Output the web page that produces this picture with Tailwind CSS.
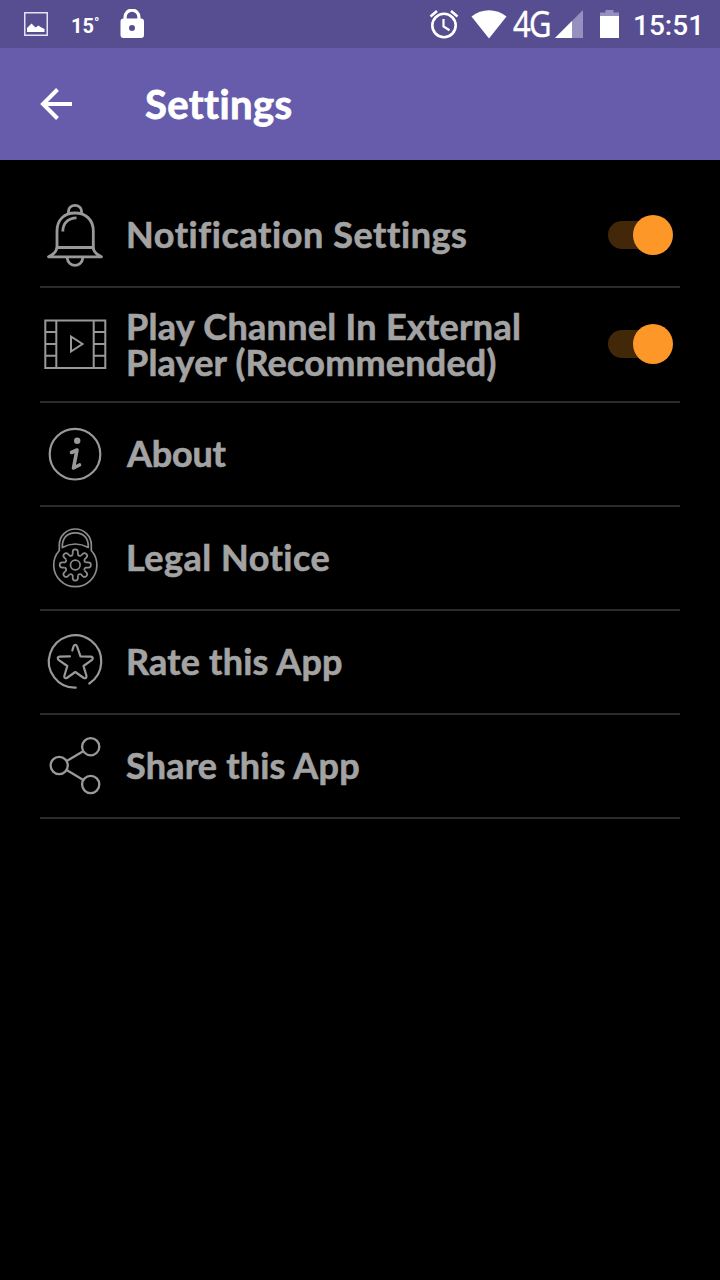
<!DOCTYPE html>
<html lang="en">
	<head>
		<meta charset="UTF-8" />
		<meta name="viewport" content="width=device-width, initial-scale=1.0" />
		<title>Settings</title>
		<script src="https://cdn.jsdelivr.net/npm/@tailwindcss/browser@4"></script>
	</head>
	<body class="min-h-screen overflow-hidden bg-black font-['Lato',sans-serif] text-[#a3a3a3]">
		<!-- status bar -->
		<div class="flex h-12 items-center bg-[#574e91] pl-6 pr-4 font-['Roboto',sans-serif] text-white">
			<svg class="h-6 w-6" viewBox="0 0 24 24" fill="none">
				<rect x="0.75" y="0.75" width="22.5" height="22.5" stroke="#e4e2f0" stroke-width="1.5" />
				<path fill="white" d="M3 20v-4l4.500-4.500 4 4 3-2 2 1.500 4 2v3z" />
			</svg>
			<span class="ml-[23px] flex w-[29px] pt-[3px] text-[20px] leading-6 font-bold">15<span class="text-[14px] leading-[18px]">°</span></span>
			<svg class="ml-5 h-[30px] w-6" viewBox="0 0 24 30">
				<path
					fill="white"
					fill-rule="evenodd"
					d="M3.500 9.500V8a8 8 0 0 1 17 0v1.500H21a3 3 0 0 1 3 3V26a3 3 0 0 1-3 3H3.500a3 3 0 0 1-3-3V12.500a3 3 0 0 1 3-3zM6.700 9.500h10.600V8a5.300 5.300 0 0 0-10.600 0zM12 16a3 3 0 1 0 0 6 3 3 0 0 0 0-6z"
				></path>
			</svg>
			<svg class="ml-auto h-[30px] w-[30px]" viewBox="0 0 30 30" fill="none" stroke="white">
				<circle cx="15" cy="16.500" r="11.700" stroke-width="2.600" />
				<path stroke-width="2.200" d="M14.500 10v7.500l6 3.800" />
				<path stroke-width="2.600" d="M1.500 7.500l6.500-5.500M28.500 7.500L22 2" />
			</svg>
			<svg class="ml-3 h-[30px] w-9" viewBox="0 0 36 30">
				<path fill="white" d="M0.500 7.500C11-1 25-1 35.500 7.500L18 29.500z" />
			</svg>
			<span class="ml-1.5 w-[42px] origin-left scale-x-[0.86] font-['Open_Sans',sans-serif] text-[36px] leading-[48px] tracking-[-2px] [-webkit-text-stroke:0.5px_white]">4G</span>
			<svg class="h-7 w-7" viewBox="0 0 28 28">
				<path fill="#9790be" d="M0 28L28 0v28z" />
				<path fill="white" d="M0 28L17 11V28z" />
			</svg>
			<svg class="ml-[17px] h-7 w-5" viewBox="0 0 20 28">
				<path fill="#9790be" d="M0 6V2.500H5.500V0h8v2.500H19V6z" />
				<path fill="white" d="M0 6h19v22H0z" />
			</svg>
			<span class="ml-[13px] w-[71px] pt-1 text-[28px] leading-[44px] font-medium">15:51</span>
		</div>

		<!-- toolbar -->
		<header class="flex h-28 items-center bg-[#665cab] pl-10 text-white">
			<svg class="h-8 w-8" viewBox="0 0 32 32" fill="none" stroke="white" stroke-width="4">
				<path d="M32 16H3M17.500 1.500L3 16l14.500 14.500" />
			</svg>
			<h1 class="ml-[73px] text-[40px] leading-[48px] font-bold tracking-[0.4px] [-webkit-text-stroke:0.8px_white]">Settings</h1>
		</header>

		<main class="px-10 pt-6 text-[36px] leading-9 font-bold tracking-[0.2px] [-webkit-text-stroke:0.6px_#a3a3a3]">
			<div class="flex h-[104px] items-center border-b-2 border-[#2b2b2b]">
				<svg class="h-[70px] w-[70px]" viewBox="0 0 70 70" fill="none" stroke="#999" stroke-width="2.800">
					<path d="M28.500 13.500v-2.500a6.400 5.500 0 0 1 13 0v2.500" />
					<path d="M17 47.500V31C17 20 24 13 35 13s18.300 7 18.300 18v16.500z" />
					<path stroke-linejoin="round" d="M17 47.500q-1 6-8.500 9.300h53q-7.500-3.300-8.500-9.300M27 57.500c1.500 10.500 14.500 10.500 16 0" />
					<path d="M22.800 31.500c0-8 5-13.500 13.700-13.700" />
				</svg>
				<span class="ml-4 pb-0.5 tracking-[0.57px]">Notification Settings</span>
				<div class="relative mr-2 ml-auto h-7 w-16 rounded-full bg-[#422709]">
					<div class="absolute -top-1.5 -right-px h-10 w-10 rounded-full bg-[#fd9727]"></div>
				</div>
			</div>
			<div class="flex h-[115px] items-center border-b-2 border-[#2b2b2b] pb-px">
				<svg class="h-[70px] w-[70px]" viewBox="0 0 70 70" fill="none" stroke="#999" stroke-width="2">
					<path d="M5.300 11.500h60V59h-60zM16.300 11.500V59M53.700 11.500V59" />
					<path d="M5.300 23h11M5.300 35h11M5.300 46.700h11M53.700 23h11.600M53.700 35h11.600M53.700 46.700h11.600" />
					<path d="M31 27.500v15L42.500 35z" />
				</svg>
				<div class="ml-4 pb-px">
					<p class="tracking-[0.3px]">Play Channel In External</p>
					<p>Player (Recommended)</p>
				</div>
				<div class="relative mr-2 ml-auto h-7 w-16 rounded-full bg-[#422709]">
					<div class="absolute -top-1.5 -right-px h-10 w-10 rounded-full bg-[#fd9727]"></div>
				</div>
			</div>
			<div class="flex h-[104px] items-center border-b-2 border-[#2b2b2b]">
				<svg class="h-[70px] w-[70px]" viewBox="0 0 70 70" fill="none" stroke="#999" stroke-width="2.200">
					<circle cx="35" cy="35.200" r="25.300" />
					<circle cx="37.200" cy="21.800" r="3.200" fill="#999" stroke="none" />
					<path stroke-width="3.600" stroke-linecap="round" stroke-linejoin="round" d="M31.500 33.500l5.500-2.500-3.500 18 6-3" />
				</svg>
				<span class="ml-[17px] pb-0.5 tracking-[-0.2px]">About</span>
			</div>
			<div class="flex h-[104px] items-center border-b-2 border-[#2b2b2b]">
				<svg class="h-[70px] w-[70px]" viewBox="0 0 70 70" fill="none" stroke="#8c8c8c" stroke-width="1.700">
					<path d="M19.300 27.500V22a16 16 0 0 1 32 0v5.500A21.600 21.600 0 1 1 19.300 27.500z" />
					<path stroke-linejoin="round" d="M22.300 24.500C22 15 27 9.800 35.300 9.800s13.300 5.200 13 14.700q-13-7-26 0z" />
					<circle cx="35.300" cy="42" r="4.800" />
					<g transform="translate(35.300 42)">
						<path id="tooth" d="M-2.600-10.500V-13a2.600 2.600 0 0 1 5.200 0V-10.500Q3.600-8.600 5.590-9.260" />
						<use href="#tooth" transform="rotate(45)" />
						<use href="#tooth" transform="rotate(90)" />
						<use href="#tooth" transform="rotate(135)" />
						<use href="#tooth" transform="rotate(180)" />
						<use href="#tooth" transform="rotate(225)" />
						<use href="#tooth" transform="rotate(270)" />
						<use href="#tooth" transform="rotate(315)" />
					</g>
				</svg>
				<span class="ml-4 pb-0.5 tracking-[0.5px]">Legal Notice</span>
			</div>
			<div class="flex h-[104px] items-center border-b-2 border-[#2b2b2b]">
				<svg class="h-[70px] w-[70px]" viewBox="0 0 70 70" fill="none" stroke="#999" stroke-width="2.200" stroke-linecap="round" stroke-linejoin="round">
					<path d="M35.700 60.700A26.200 26.200 0 1 1 49.300 56.500" />
					<path
						d="M32.300 23.500L33.500 19.500q1.800-3.500 3.600 0L40.500 29.300l10.500.300q3 1 1 3.200L43.500 39l3 10q0 3-2.700 2L35.300 45l-8.500 6q-2.700 1-2.500-2L27.300 39l-8.800-6.200q-2-2.200 1-3.200L30 29.300"
					/>
				</svg>
				<span class="ml-4 pb-0.5">Rate this App</span>
			</div>
			<div class="flex h-[104px] items-center border-b-2 border-[#2b2b2b]">
				<svg class="h-[70px] w-[70px]" viewBox="0 0 70 70" fill="none" stroke="#999" stroke-width="2.300">
					<circle cx="50.700" cy="15.700" r="8.600" />
					<circle cx="19.200" cy="34.500" r="8.600" />
					<circle cx="50.700" cy="53.500" r="8.600" />
					<path d="M26.700 30L43.200 20.200M26.700 39l16.500 10" />
				</svg>
				<span class="ml-4 pb-0.5">Share this App</span>
			</div>
		</main>
	</body>
</html>
